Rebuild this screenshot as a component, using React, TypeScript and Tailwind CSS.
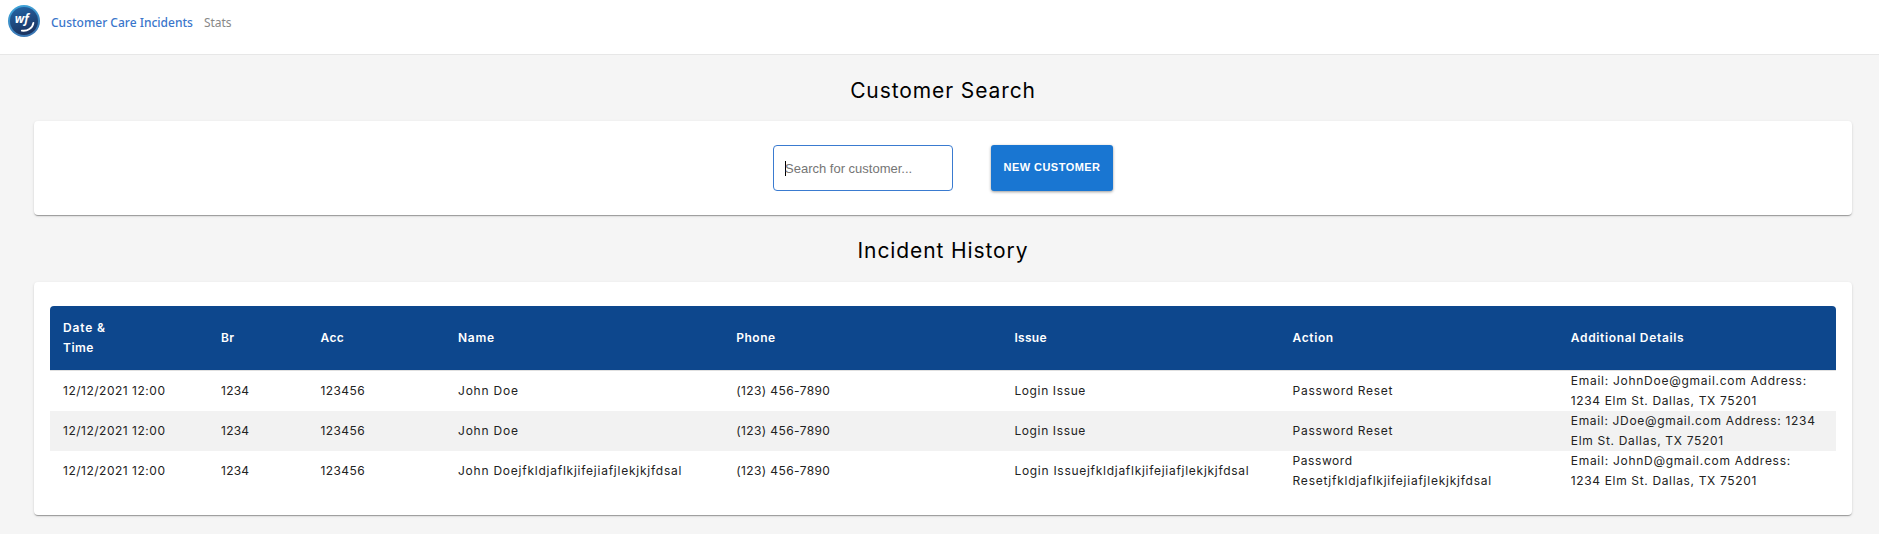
import React from 'react';

type Text = { text: string; tracking: string };

const headers: Text[][] = [
  [
    { text: 'Date &', tracking: 'tracking-[0.85px]' },
    { text: 'Time', tracking: 'tracking-[0.5px]' },
  ],
  [{ text: 'Br', tracking: 'tracking-[0.3px]' }],
  [{ text: 'Acc', tracking: 'tracking-[0.4px]' }],
  [{ text: 'Name', tracking: 'tracking-[0.7px]' }],
  [{ text: 'Phone', tracking: 'tracking-[0.54px]' }],
  [{ text: 'Issue', tracking: 'tracking-[0.3px]' }],
  [{ text: 'Action', tracking: 'tracking-[0.6px]' }],
  [{ text: 'Additional Details', tracking: 'tracking-[0.67px]' }],
];

const date: Text[] = [{ text: '12/12/2021 12:00', tracking: 'tracking-[0.51px]' }];
const branch: Text[] = [{ text: '1234', tracking: 'tracking-[0.25px]' }];
const account: Text[] = [{ text: '123456', tracking: 'tracking-[0.4px]' }];
const name: Text[] = [{ text: 'John Doe', tracking: 'tracking-[0.79px]' }];
const phone: Text[] = [{ text: '(123) 456-7890', tracking: 'tracking-[0.4px]' }];
const issue: Text[] = [{ text: 'Login Issue', tracking: 'tracking-[0.63px]' }];
const action: Text[] = [{ text: 'Password Reset', tracking: 'tracking-[0.71px]' }];

const rows: Text[][][] = [
  [
    date, branch, account, name, phone, issue, action,
    [
      { text: 'Email: JohnDoe@gmail.com Address:', tracking: 'tracking-[0.73px]' },
      { text: '1234 Elm St. Dallas, TX 75201', tracking: 'tracking-[0.65px]' },
    ],
  ],
  [
    date, branch, account, name, phone, issue, action,
    [
      { text: 'Email: JDoe@gmail.com Address: 1234', tracking: 'tracking-[0.67px]' },
      { text: 'Elm St. Dallas, TX 75201', tracking: 'tracking-[0.69px]' },
    ],
  ],
  [
    date, branch, account,
    [{ text: 'John Doejfkldjaflkjifejiafjlekjkjfdsal', tracking: 'tracking-[0.76px]' }],
    phone,
    [{ text: 'Login Issuejfkldjaflkjifejiafjlekjkjfdsal', tracking: 'tracking-[0.72px]' }],
    [
      { text: 'Password', tracking: 'tracking-[0.57px]' },
      { text: 'Resetjfkldjaflkjifejiafjlekjkjfdsal', tracking: 'tracking-[0.76px]' },
    ],
    [
      { text: 'Email: JohnD@gmail.com Address:', tracking: 'tracking-[0.72px]' },
      { text: '1234 Elm St. Dallas, TX 75201', tracking: 'tracking-[0.65px]' },
    ],
  ],
];

const columns = 'grid grid-cols-[158px_99.5px_137.5px_repeat(4,278.2px)_1fr] items-center';
const card =
  'rounded bg-white shadow-[0_2px_1px_-1px_rgba(0,0,0,0.2),0_1px_1px_0_rgba(0,0,0,0.14),0_1px_3px_0_rgba(0,0,0,0.12)]';

function Cell({ lines }: { lines: Text[] }) {
  return (
    <div className="pl-[13px] whitespace-nowrap">
      {lines.map((l) => (
        <div key={l.text} className={l.tracking}>
          {l.text}
        </div>
      ))}
    </div>
  );
}

function Logo() {
  return (
    <svg width="32" height="32" viewBox="0 0 32 32">
      <defs>
        <linearGradient id="rim" x1="0" y1="0" x2="0.3" y2="1">
          <stop offset="0" stopColor="#3fa9dd" />
          <stop offset="1" stopColor="#3b78b5" />
        </linearGradient>
        <linearGradient id="disc" x1="0" y1="0" x2="0.3" y2="1">
          <stop offset="0" stopColor="#2567a8" />
          <stop offset="1" stopColor="#1b3563" />
        </linearGradient>
      </defs>
      <circle cx="16" cy="16" r="16" fill="url(#rim)" />
      <circle cx="16" cy="16" r="14" fill="url(#disc)" />
      <text x="6.8" y="18.4" fill="#fff" fontFamily="Open Sans, sans-serif" fontSize="13" fontWeight="700" fontStyle="italic" textLength="14" lengthAdjust="spacingAndGlyphs">
        wf
      </text>
      <path d="M13.8 25.6 C19.5 26.4 24.6 23.2 25.4 17.8" fill="none" stroke="#fff" strokeWidth="1.8" strokeLinecap="round" />
    </svg>
  );
}

export default function App() {
  return (
    <div className="h-[534px] overflow-hidden bg-[#f5f5f5] font-[Inter,sans-serif]">
      <header className="flex h-[55px] items-start border-b border-[#e7e7e7] bg-white pt-[5px] pl-2 font-['Noto_Sans',sans-serif] text-xs leading-[36px]">
        <Logo />
        <nav className="flex">
          <a className="ml-[11px] font-medium whitespace-nowrap text-[#3a76cb]">Customer Care Incidents</a>
          <a className="ml-[11px] text-[#888]">Stats</a>
        </nav>
      </header>

      <main className="pr-[27px] pl-[34px]">
        <h1 className="h-[66px] pt-5 text-center text-[21px] leading-8 font-normal tracking-[0.9px] text-black">Customer Search</h1>
        <section className={`flex h-[94px] items-start justify-center gap-[38px] pt-6 ${card}`}>
          <div className="flex h-[46px] w-[180px] items-center rounded border border-[#3a7bd0] pt-px pl-[11px]">
            <span className="h-[15px] w-px bg-black" />
            <span className="-ml-px font-['Liberation_Sans',sans-serif] text-[13px] text-[#757575]">Search for customer...</span>
          </div>
          <button className="h-[46px] w-[122px] rounded-[3px] bg-[#1976d2] pb-[2px] font-['Liberation_Sans',sans-serif] text-[11px] font-bold tracking-[0.45px] whitespace-nowrap text-white shadow-[0_1px_3px_rgba(0,0,0,0.4)]">
            NEW CUSTOMER
          </button>
        </section>

        <h2 className="h-[67px] pt-5 text-center text-[21px] leading-8 font-normal tracking-[0.9px] text-black">Incident History</h2>
        <section className={`h-[233px] px-4 pt-6 text-xs leading-5 text-[#222] ${card}`}>
          <div className={`h-16 rounded-t bg-[#0d478d] font-semibold text-white ${columns}`}>
            {headers.map((lines) => (
              <Cell key={lines[0].text} lines={lines} />
            ))}
          </div>
          <div className="border-t border-[#e0e0e0]">
            {rows.map((cells, r) => (
              <div key={r} className={`h-10 even:bg-[#f2f2f2] ${columns}`}>
                {cells.map((lines, c) => (
                  <Cell key={c} lines={lines} />
                ))}
              </div>
            ))}
          </div>
        </section>
      </main>
    </div>
  );
}
